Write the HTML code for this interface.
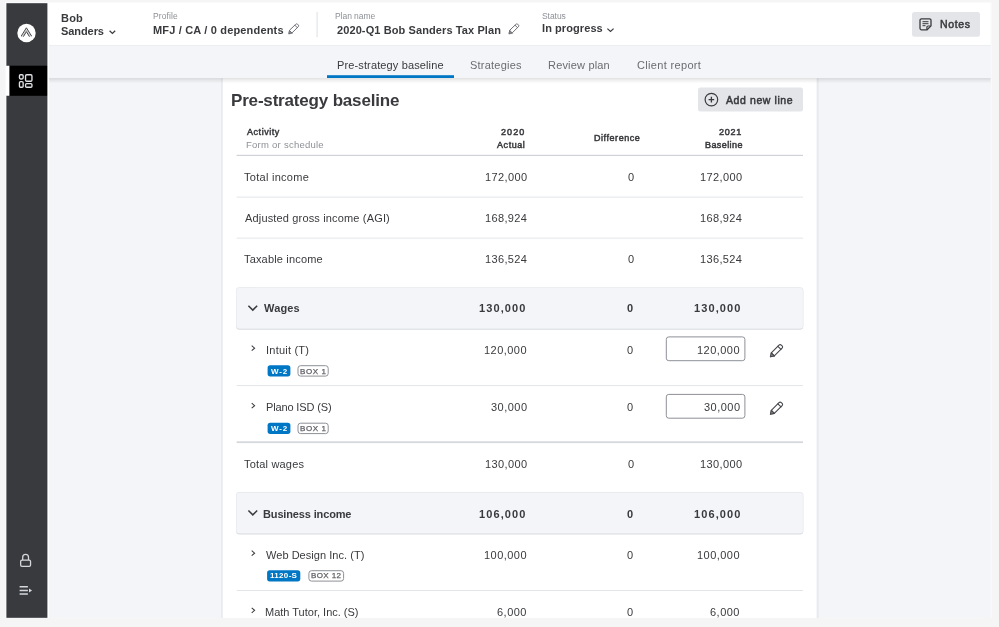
<!DOCTYPE html>
<html lang="en"><head><meta charset="utf-8"><title>Tax Plan - Pre-strategy baseline</title>
<style>
html,body{margin:0;padding:0}
body{width:999px;height:627px;overflow:hidden;background:#f5f5f5;position:relative;font-family:"Liberation Sans",Arial,sans-serif;color:#393a3d}
#bg{position:absolute;left:0;top:0}
#tx{position:absolute;left:0;top:0;width:999px;height:627px;overflow:hidden}
.t{position:absolute;white-space:pre;will-change:transform}
</style></head><body>
<svg id="bg" width="999" height="627" viewBox="0 0 999 627">
<defs><linearGradient id="sh" x1="0" y1="0" x2="0" y2="1"><stop offset="0" stop-color="#000" stop-opacity=".12"/><stop offset=".5" stop-color="#000" stop-opacity=".05"/><stop offset="1" stop-color="#000" stop-opacity="0"/></linearGradient></defs>
<rect x="5.20" y="2.00" width="986.60" height="616.60" fill="#fafafa"/>
<rect x="6.40" y="3.00" width="984.40" height="614.90" fill="#f4f5f8"/>
<rect x="221.10" y="60.00" width="597.60" height="558.00" fill="#e8eaee"/>
<rect x="222.80" y="60.00" width="593.80" height="558.00" fill="#fff"/>
<rect x="698.00" y="87.40" width="105.00" height="24.20" rx="2.5" fill="#e3e5e8"/>
<g transform="translate(704.40 92.60)"><circle cx="7" cy="7" r="6.3" fill="none" stroke="#393a3d" stroke-width="1.2"/><path d="M7 4.2v5.6M4.2 7h5.6" stroke="#393a3d" stroke-width="1.3" fill="none"/></g>
<rect x="236.60" y="154.80" width="566.40" height="1.20" fill="#cfd2d8"/>
<rect x="236.60" y="196.60" width="566.40" height="1.00" fill="#e3e5e8"/>
<rect x="236.60" y="237.60" width="566.40" height="1.00" fill="#e3e5e8"/>
<rect x="236.20" y="288.20" width="567.00" height="41.50" rx="3.2" fill="#d9dce1"/>
<rect x="236.00" y="287.30" width="567.40" height="41.50" rx="3.2" fill="#e6e8ec"/>
<rect x="236.60" y="287.90" width="566.20" height="40.50" rx="2.6" fill="#f4f5f8"/>
<g transform="translate(247.80 305.10)"><path d="M0.6 0.6L5 5 9.4 0.6" fill="none" stroke="#393a3d" stroke-width="1.5"/></g>
<g transform="translate(250.90 345.00)"><path d="M0.8 0.7L3.7 3.2 0.8 5.7" fill="none" stroke="#393a3d" stroke-width="1.05"/></g>
<rect x="666.30" y="336.90" width="78.60" height="23.80" rx="2.5" fill="#fff" stroke="#8d9096" stroke-width="1"/>
<g transform="translate(769.40 343.80)" fill="none" stroke="#46474b" stroke-width="1.1" stroke-linejoin="round" stroke-linecap="round"><path d="M1 13l0.9-3.9 3 3z" fill="currentColor" opacity=".55"/><path d="M9.6 1.3a1.6 1.6 0 0 1 2.3 0l0.8 0.8a1.6 1.6 0 0 1 0 2.3L4.9 12.1 1 13l0.9-3.9z"/><path d="M8.5 2.5l3.1 3.1M2 9.2l3 3"/></g>
<rect x="267.60" y="365.20" width="22.80" height="11.20" rx="2.6" fill="#0077c5"/>
<rect x="298.00" y="365.70" width="30.20" height="10.40" rx="2.6" fill="#fff" stroke="#8d9096" stroke-width="1"/>
<rect x="236.60" y="385.10" width="566.40" height="1.00" fill="#e3e5e8"/>
<g transform="translate(250.90 402.50)"><path d="M0.8 0.7L3.7 3.2 0.8 5.7" fill="none" stroke="#393a3d" stroke-width="1.05"/></g>
<rect x="666.30" y="394.40" width="78.60" height="23.80" rx="2.5" fill="#fff" stroke="#8d9096" stroke-width="1"/>
<g transform="translate(769.40 401.30)" fill="none" stroke="#46474b" stroke-width="1.1" stroke-linejoin="round" stroke-linecap="round"><path d="M1 13l0.9-3.9 3 3z" fill="currentColor" opacity=".55"/><path d="M9.6 1.3a1.6 1.6 0 0 1 2.3 0l0.8 0.8a1.6 1.6 0 0 1 0 2.3L4.9 12.1 1 13l0.9-3.9z"/><path d="M8.5 2.5l3.1 3.1M2 9.2l3 3"/></g>
<rect x="267.60" y="422.70" width="22.80" height="11.20" rx="2.6" fill="#0077c5"/>
<rect x="298.00" y="423.20" width="30.20" height="10.40" rx="2.6" fill="#fff" stroke="#8d9096" stroke-width="1"/>
<rect x="236.60" y="441.30" width="566.40" height="1.80" fill="#d4d7dc"/>
<rect x="236.20" y="493.00" width="567.00" height="41.50" rx="3.2" fill="#d9dce1"/>
<rect x="236.00" y="492.10" width="567.40" height="41.50" rx="3.2" fill="#e6e8ec"/>
<rect x="236.60" y="492.70" width="566.20" height="40.50" rx="2.6" fill="#f4f5f8"/>
<g transform="translate(247.80 509.90)"><path d="M0.6 0.6L5 5 9.4 0.6" fill="none" stroke="#393a3d" stroke-width="1.5"/></g>
<g transform="translate(250.90 550.00)"><path d="M0.8 0.7L3.7 3.2 0.8 5.7" fill="none" stroke="#393a3d" stroke-width="1.05"/></g>
<rect x="267.10" y="570.20" width="33.20" height="11.20" rx="2.6" fill="#0077c5"/>
<rect x="308.90" y="570.70" width="34.70" height="10.40" rx="2.6" fill="#fff" stroke="#8d9096" stroke-width="1"/>
<rect x="236.60" y="590.00" width="566.40" height="1.00" fill="#e3e5e8"/>
<g transform="translate(250.90 607.10)"><path d="M0.8 0.7L3.7 3.2 0.8 5.7" fill="none" stroke="#393a3d" stroke-width="1.05"/></g>
<rect x="47.40" y="78.00" width="943.20" height="5.50" fill="url(#sh)"/>
<rect x="47.40" y="45.00" width="943.20" height="33.10" fill="#f4f5f8"/>
<rect x="327.00" y="75.20" width="127.00" height="2.80" fill="#0077c5"/>
<rect x="47.40" y="3.00" width="943.20" height="42.40" fill="#fff"/>
<rect x="47.40" y="45.10" width="943.20" height="0.80" fill="#e9ebef"/>
<g transform="translate(109.20 30.40)"><path d="M0.4 0.4L3.2 3.1 6 0.4" fill="none" stroke="#393a3d" stroke-width="1.2"/></g>
<g transform="translate(288.00 23.20) scale(0.806)" fill="none" stroke="#6b6c72" stroke-width="1.2" stroke-linejoin="round" stroke-linecap="round"><path d="M1 13l0.9-3.9 3 3z" fill="currentColor" opacity=".55"/><path d="M9.6 1.3a1.6 1.6 0 0 1 2.3 0l0.8 0.8a1.6 1.6 0 0 1 0 2.3L4.9 12.1 1 13l0.9-3.9z"/><path d="M8.5 2.5l3.1 3.1M2 9.2l3 3"/></g>
<rect x="316.60" y="12.00" width="1.00" height="25.20" fill="#dcdfe4"/>
<g transform="translate(508.20 23.20) scale(0.806)" fill="none" stroke="#6b6c72" stroke-width="1.2" stroke-linejoin="round" stroke-linecap="round"><path d="M1 13l0.9-3.9 3 3z" fill="currentColor" opacity=".55"/><path d="M9.6 1.3a1.6 1.6 0 0 1 2.3 0l0.8 0.8a1.6 1.6 0 0 1 0 2.3L4.9 12.1 1 13l0.9-3.9z"/><path d="M8.5 2.5l3.1 3.1M2 9.2l3 3"/></g>
<g transform="translate(607.00 28.20)"><path d="M0.4 0.4L3.5 3.3 6.6 0.4" fill="none" stroke="#393a3d" stroke-width="1.2"/></g>
<rect x="912.00" y="12.00" width="68.00" height="24.80" rx="2.5" fill="#e3e5e8"/>
<g transform="translate(919.30 18.10)"><path d="M2.2 0.7h8a1.5 1.5 0 0 1 1.5 1.5v5.6L7.8 11.7H2.2a1.5 1.5 0 0 1-1.5-1.5v-8a1.5 1.5 0 0 1 1.5-1.5z" fill="none" stroke="#393a3d" stroke-width="1.3" stroke-linejoin="round"/><path d="M3.2 3.6h6M3.2 5.6h6M3.2 7.6h3" stroke="#393a3d" stroke-width="1" fill="none"/><path d="M7.6 11.4V9.2a1.3 1.3 0 0 1 1.3-1.3h2.4" fill="none" stroke="#393a3d" stroke-width="1.2"/></g>
<rect x="47.00" y="3.00" width="2.10" height="614.90" fill="#fff"/>
<rect x="6.40" y="3.20" width="41.00" height="614.70" fill="#393a3d"/>
<rect x="6.40" y="65.70" width="40.70" height="30.10" fill="#000"/>
<rect x="6.00" y="65.70" width="3.40" height="30.10" fill="#fff"/>
<g transform="translate(17.30 23.80)"><circle cx="9.2" cy="9.2" r="9.2" fill="#fff"/><path d="M4.5 12.6L4 12.2 9.1 4 14.2 12.2 13.7 12.6M6.3 13L6.1 12.8 9.1 7.8 12.1 12.8 11.9 13" fill="none" stroke="#393a3d" stroke-width="0.95"/><path d="M5.2 12.5L9.1 6 13 12.5" fill="none" stroke="#393a3d" stroke-width="0.45" opacity=".7"/></g>
<g transform="translate(18.80 74.10)" fill="none" stroke="#dfe1e5" stroke-width="1.35"><rect x="0.65" y="0.65" width="3.7" height="4.2" rx="1.1"/><rect x="6.75" y="0.65" width="6.4" height="6.5" rx="1.2"/><rect x="0.65" y="7.45" width="3.7" height="5.7" rx="1.1"/><rect x="6.75" y="9.45" width="6.4" height="3.7" rx="1.1"/></g>
<g transform="translate(20.00 553.60)" fill="none" stroke="#d4d7dc" stroke-width="1.3"><rect x="0.65" y="6.6" width="9.9" height="6.1" rx="1.4"/><path d="M2.7 6.4V3.7a2.9 2.9 0 0 1 5.8 0v2.7"/></g>
<g transform="translate(19.60 586.00)"><path d="M0 0.8h8.3M0 4.5h8.3M0 7.9h8.3" stroke="#d4d7dc" stroke-width="1.5" fill="none"/><path d="M9.4 2.4L12.5 4.5 9.4 6.6z" fill="#d4d7dc"/></g>
<rect x="0.00" y="617.90" width="999.00" height="10.00" fill="#f5f5f5"/>
</svg>
<div id="tx">
<span class="t" style="left:230.93px;top:89px;font-size:17px;line-height:23px;font-weight:700;letter-spacing:-0.177px;">Pre-strategy baseline</span>
<span class="t" style="left:725.60px;top:93px;font-size:10.5px;line-height:14px;-webkit-text-stroke:0.5px currentColor;letter-spacing:0.588px;">Add new line</span>
<span class="t" style="left:247.40px;top:126px;font-size:9px;line-height:12px;-webkit-text-stroke:0.5px currentColor;letter-spacing:0.553px;">Activity</span>
<span class="t" style="left:246.40px;top:138px;font-size:9.5px;line-height:13px;color:#8d9096;letter-spacing:0.249px;">Form or schedule</span>
<span class="t" style="left:501.45px;top:126px;font-size:9px;line-height:12px;-webkit-text-stroke:0.5px currentColor;letter-spacing:1.083px;">2020</span>
<span class="t" style="left:497.00px;top:139px;font-size:9px;line-height:12px;-webkit-text-stroke:0.5px currentColor;letter-spacing:0.564px;">Actual</span>
<span class="t" style="left:594.30px;top:132px;font-size:9px;line-height:12px;-webkit-text-stroke:0.5px currentColor;letter-spacing:0.552px;">Difference</span>
<span class="t" style="left:719.25px;top:126px;font-size:9px;line-height:12px;-webkit-text-stroke:0.5px currentColor;letter-spacing:0.740px;">2021</span>
<span class="t" style="left:705.10px;top:139px;font-size:9px;line-height:12px;-webkit-text-stroke:0.5px currentColor;letter-spacing:0.414px;">Baseline</span>
<span class="t" style="left:244.31px;top:170px;font-size:11px;line-height:14px;letter-spacing:0.272px;">Total income</span>
<span class="t" style="left:484.92px;top:170px;font-size:11px;line-height:14px;letter-spacing:0.392px;">172,000</span>
<span class="t" style="left:628.01px;top:170px;font-size:11px;line-height:14px;">0</span>
<span class="t" style="left:699.72px;top:170px;font-size:11px;line-height:14px;letter-spacing:0.392px;">172,000</span>
<span class="t" style="left:244.55px;top:211px;font-size:11px;line-height:14px;letter-spacing:0.160px;">Adjusted gross income (AGI)</span>
<span class="t" style="left:484.92px;top:211px;font-size:11px;line-height:14px;letter-spacing:0.363px;">168,924</span>
<span class="t" style="left:699.72px;top:211px;font-size:11px;line-height:14px;letter-spacing:0.363px;">168,924</span>
<span class="t" style="left:244.31px;top:252px;font-size:11px;line-height:14px;letter-spacing:0.168px;">Taxable income</span>
<span class="t" style="left:484.92px;top:252px;font-size:11px;line-height:14px;letter-spacing:0.363px;">136,524</span>
<span class="t" style="left:628.01px;top:252px;font-size:11px;line-height:14px;">0</span>
<span class="t" style="left:699.72px;top:252px;font-size:11px;line-height:14px;letter-spacing:0.363px;">136,524</span>
<span class="t" style="left:263.94px;top:301px;font-size:11px;line-height:14px;font-weight:700;letter-spacing:0.152px;">Wages</span>
<span class="t" style="left:479.30px;top:301px;font-size:11px;line-height:14px;font-weight:700;letter-spacing:1.098px;">130,000</span>
<span class="t" style="left:626.92px;top:301px;font-size:11px;line-height:14px;font-weight:700;">0</span>
<span class="t" style="left:694.00px;top:301px;font-size:11px;line-height:14px;font-weight:700;letter-spacing:1.098px;">130,000</span>
<span class="t" style="left:265.90px;top:343px;font-size:11px;line-height:14px;letter-spacing:0.226px;">Intuit (T)</span>
<span class="t" style="left:483.72px;top:343px;font-size:11px;line-height:14px;letter-spacing:0.458px;">120,000</span>
<span class="t" style="left:626.91px;top:343px;font-size:11px;line-height:14px;">0</span>
<span class="t" style="left:697.22px;top:343px;font-size:11px;line-height:14px;letter-spacing:0.458px;">120,000</span>
<span class="t" style="left:270.72px;top:366px;font-size:8px;line-height:11px;font-weight:700;color:#fff;letter-spacing:0.840px;">W-2</span>
<span class="t" style="left:299.66px;top:366px;font-size:8px;line-height:11px;color:#5f6065;letter-spacing:0.598px;-webkit-text-stroke:0.25px currentColor;">BOX 1</span>
<span class="t" style="left:265.90px;top:400px;font-size:11px;line-height:14px;letter-spacing:-0.140px;">Plano ISD (S)</span>
<span class="t" style="left:490.50px;top:400px;font-size:11px;line-height:14px;letter-spacing:0.480px;">30,000</span>
<span class="t" style="left:626.91px;top:400px;font-size:11px;line-height:14px;">0</span>
<span class="t" style="left:704.00px;top:400px;font-size:11px;line-height:14px;letter-spacing:0.480px;">30,000</span>
<span class="t" style="left:270.72px;top:423px;font-size:8px;line-height:11px;font-weight:700;color:#fff;letter-spacing:0.840px;">W-2</span>
<span class="t" style="left:299.66px;top:423px;font-size:8px;line-height:11px;color:#5f6065;letter-spacing:0.598px;-webkit-text-stroke:0.25px currentColor;">BOX 1</span>
<span class="t" style="left:244.31px;top:457px;font-size:11px;line-height:14px;letter-spacing:0.190px;">Total wages</span>
<span class="t" style="left:484.92px;top:457px;font-size:11px;line-height:14px;letter-spacing:0.392px;">130,000</span>
<span class="t" style="left:628.01px;top:457px;font-size:11px;line-height:14px;">0</span>
<span class="t" style="left:699.72px;top:457px;font-size:11px;line-height:14px;letter-spacing:0.392px;">130,000</span>
<span class="t" style="left:263.00px;top:507px;font-size:11px;line-height:14px;font-weight:700;letter-spacing:-0.143px;">Business income</span>
<span class="t" style="left:479.30px;top:507px;font-size:11px;line-height:14px;font-weight:700;letter-spacing:1.098px;">106,000</span>
<span class="t" style="left:626.92px;top:507px;font-size:11px;line-height:14px;font-weight:700;">0</span>
<span class="t" style="left:694.00px;top:507px;font-size:11px;line-height:14px;font-weight:700;letter-spacing:1.098px;">106,000</span>
<span class="t" style="left:266.28px;top:548px;font-size:11px;line-height:14px;letter-spacing:0.040px;">Web Design Inc. (T)</span>
<span class="t" style="left:483.72px;top:548px;font-size:11px;line-height:14px;letter-spacing:0.458px;">100,000</span>
<span class="t" style="left:626.91px;top:548px;font-size:11px;line-height:14px;">0</span>
<span class="t" style="left:697.22px;top:548px;font-size:11px;line-height:14px;letter-spacing:0.458px;">100,000</span>
<span class="t" style="left:269.71px;top:570px;font-size:8px;line-height:11px;font-weight:700;color:#fff;letter-spacing:0.318px;">1120-S</span>
<span class="t" style="left:310.56px;top:570px;font-size:8px;line-height:11px;color:#5f6065;letter-spacing:0.400px;-webkit-text-stroke:0.25px currentColor;">BOX 12</span>
<span class="t" style="left:265.40px;top:605px;font-size:11px;line-height:14px;">Math Tutor, Inc. (S)</span>
<span class="t" style="left:496.94px;top:605px;font-size:11px;line-height:14px;letter-spacing:0.490px;">6,000</span>
<span class="t" style="left:626.91px;top:605px;font-size:11px;line-height:14px;">0</span>
<span class="t" style="left:710.44px;top:605px;font-size:11px;line-height:14px;letter-spacing:0.490px;">6,000</span>
<span class="t" style="left:337.40px;top:58px;font-size:11px;line-height:14px;letter-spacing:0.130px;">Pre-strategy baseline</span>
<span class="t" style="left:470.20px;top:58px;font-size:11px;line-height:14px;color:#6b6c72;letter-spacing:0.223px;">Strategies</span>
<span class="t" style="left:548.30px;top:58px;font-size:11px;line-height:14px;color:#6b6c72;letter-spacing:0.182px;">Review plan</span>
<span class="t" style="left:636.93px;top:58px;font-size:11px;line-height:14px;color:#6b6c72;letter-spacing:0.332px;">Client report</span>
<span class="t" style="left:60.60px;top:11px;font-size:11px;line-height:14px;font-weight:700;letter-spacing:0.200px;">Bob</span>
<span class="t" style="left:61.14px;top:24px;font-size:11px;line-height:14px;font-weight:700;letter-spacing:-0.077px;">Sanders</span>
<span class="t" style="left:152.55px;top:10px;font-size:8.5px;line-height:12px;color:#8d9096;letter-spacing:0.092px;">Profile</span>
<span class="t" style="left:152.70px;top:23px;font-size:11px;line-height:14px;font-weight:700;letter-spacing:0.173px;">MFJ / CA / 0 dependents</span>
<span class="t" style="left:335.35px;top:10px;font-size:8.5px;line-height:12px;color:#8d9096;letter-spacing:-0.051px;">Plan name</span>
<span class="t" style="left:336.58px;top:23px;font-size:11px;line-height:14px;font-weight:700;letter-spacing:0.101px;">2020-Q1 Bob Sanders Tax Plan</span>
<span class="t" style="left:541.61px;top:10px;font-size:8.5px;line-height:12px;color:#8d9096;letter-spacing:-0.060px;">Status</span>
<span class="t" style="left:541.80px;top:21px;font-size:11px;line-height:14px;font-weight:700;letter-spacing:0.080px;">In progress</span>
<span class="t" style="left:939.52px;top:17px;font-size:10.5px;line-height:14px;-webkit-text-stroke:0.5px currentColor;letter-spacing:0.620px;">Notes</span>
</div>
</body></html>
